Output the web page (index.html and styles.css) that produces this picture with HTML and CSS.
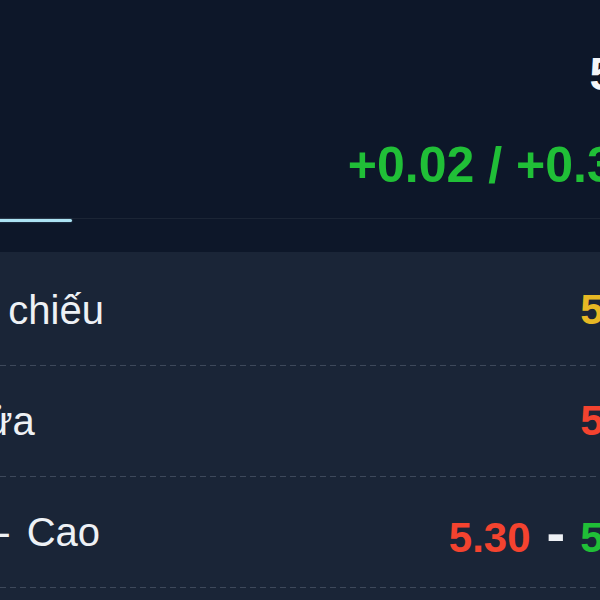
FILE: index.html
```html
<!DOCTYPE html>
<html lang="vi">
<head>
<meta charset="utf-8">
<title>Cổ phiếu</title>
<link rel="stylesheet" href="styles.css">
</head>
<body>
<div class="screen">
  <header class="quote">
    <div class="price">5.32</div>
    <div class="change">+0.02 / +0.38%</div>
  </header>
  <nav class="tabs">
    <div class="tab-indicator"></div>
  </nav>
  <section class="stats">
    <div class="row">
      <span class="label">Tham chiếu</span>
      <span class="value ref">5.30</span>
    </div>
    <div class="row">
      <span class="label">Mở cửa</span>
      <span class="value down">5.30</span>
    </div>
    <div class="row">
      <span class="label">Thấp - Cao</span>
      <span class="value"><span class="down">5.30</span><span class="sep">-</span><span class="up">5.40</span></span>
    </div>
  </section>
</div>
</body>
</html>
```

FILE: styles.css
```css
html, body {
  margin: 0;
  padding: 0;
}

body {
  background: #0d1729;
  overflow: hidden;
  font-family: "Liberation Sans", Arial, sans-serif;
  color: #eef1f5;
}

.screen {
  box-sizing: border-box;
  width: 820px;
  margin-left: -126px;
}

.quote {
  display: flex;
  flex-direction: column;
  align-items: flex-end;
  padding: 51px 7px 29px 16px;
}

.price {
  font-size: 46px;
  line-height: 46px;
  font-weight: 700;
  color: #f4f6f9;
  margin-right: 8px;
}

.change {
  margin-top: 44px;
  font-size: 50px;
  line-height: 48px;
  font-weight: 700;
  color: #20bf37;
}

.tabs {
  border-top: 1px solid #1b2535;
  padding-bottom: 30px;
}

.tab-indicator {
  width: 198px;
  height: 3px;
  background: #ace3f4;
  border-radius: 0 3px 3px 0;
  box-shadow: 0 0 2px rgba(172, 227, 244, 0.4);
}

.stats {
  background: #1a2537;
  padding: 3px 32px 40px 16px;
  min-height: 400px;
}

.row {
  display: flex;
  align-items: center;
  justify-content: space-between;
  height: 110px;
  border-bottom: 1px solid transparent;
  background-image: linear-gradient(to right, #3e495b 60%, transparent 60%);
  background-size: 10px 1px;
  background-position: left bottom;
  background-repeat: repeat-x;
  background-origin: border-box;
  background-clip: border-box;
  white-space: nowrap;
}

.label {
  font-size: 40px;
  word-spacing: 5px;
  color: #eef1f5;
}

.value {
  font-size: 42px;
  font-weight: 700;
}

.ref {
  color: #e7b824;
}

.down {
  color: #f4432f;
}

.up {
  color: #20bf37;
}

.sep {
  color: #eef1f5;
  font-size: 56px;
  margin: 0 15px 0 16px;
}
```
